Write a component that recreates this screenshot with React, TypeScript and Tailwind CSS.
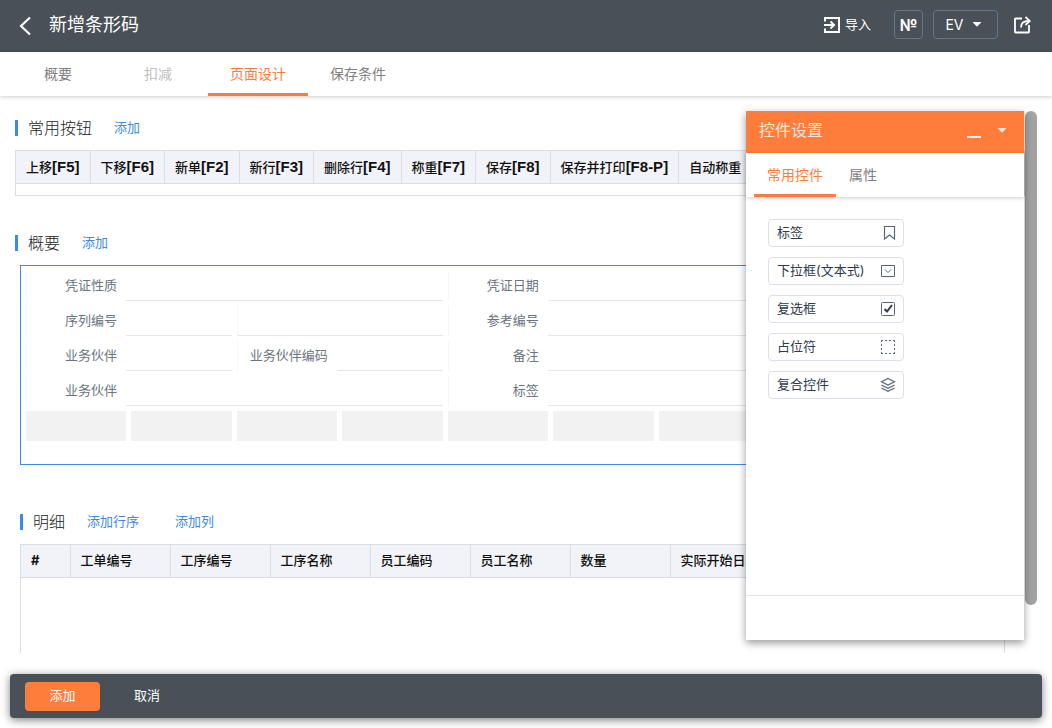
import { useState } from 'react'
import type { ReactNode } from 'react'

const tabs = [
  { name: '概要', disabled: false },
  { name: '扣减', disabled: true },
  { name: '页面设计', disabled: false },
  { name: '保存条件', disabled: false },
]

const shortcutButtons = [
  { name: '上移', hotkey: '[F5]' },
  { name: '下移', hotkey: '[F6]' },
  { name: '新单', hotkey: '[F2]' },
  { name: '新行', hotkey: '[F3]' },
  { name: '删除行', hotkey: '[F4]' },
  { name: '称重', hotkey: '[F7]' },
  { name: '保存', hotkey: '[F8]' },
  { name: '保存并打印', hotkey: '[F8-P]' },
  { name: '自动称重', hotkey: '' },
]

const detailColumns = ['工单编号', '工序编号', '工序名称', '员工编码', '员工名称', '数量', '实际开始日期', '实际结束日期', '备注']

function BackIcon() {
  return (
    <svg width="14" height="20" viewBox="0 0 14 20" fill="none" stroke="currentColor" strokeWidth="2.2">
      <path d="M12 1.500 3 10l9 8.500" />
    </svg>
  )
}

function ImportIcon() {
  return (
    <svg width="18" height="18" viewBox="0 0 18 18" fill="none" stroke="currentColor" strokeWidth="2">
      <path d="M2 5.500V2h14v14H2v-3.500" />
      <path d="M1 9h9.500M7.500 5.500 11 9l-3.500 3.500" />
    </svg>
  )
}

function ShareIcon() {
  return (
    <svg width="18" height="18" viewBox="0 0 18 18" fill="none" stroke="currentColor" strokeWidth="1.800">
      <path d="M9 2.500H2.500Q2 2.500 2 3v13q0 .5.5.5h13q.5 0 .5-.5V9" />
      <path d="M8 11.500C8 7 10.500 5 16 5" />
      <path d="M12.500 1 16.800 5l-4.300 4" />
    </svg>
  )
}

function Caret() {
  return (
    <svg width="10" height="5" viewBox="0 0 10 5" fill="currentColor">
      <path d="M0.500 0h9L5 4.800z" />
    </svg>
  )
}

function BookmarkIcon() {
  return (
    <svg width="16" height="16" viewBox="0 0 16 16" fill="none" stroke="currentColor" strokeWidth="1.200">
      <path d="M4.500 1.500h10v12.500L9.500 10 4.500 14z" />
    </svg>
  )
}

function SelectIcon() {
  return (
    <svg width="16" height="16" viewBox="0 0 16 16" fill="none" stroke="currentColor">
      <path d="M1.500 2.500h13v11h-13z" />
      <path d="M5 6.500 8 9.500l3-3" />
    </svg>
  )
}

function CheckIcon() {
  return (
    <svg width="16" height="16" viewBox="0 0 16 16" fill="none" stroke="currentColor">
      <rect x="1.500" y="1.500" width="13" height="13" rx="1" />
      <path className="stroke-[#2e3a4b]" d="M4.500 8 7 10.500l5-6.500" strokeWidth="2" />
    </svg>
  )
}

function PlaceholderIcon() {
  return (
    <svg width="16" height="16" viewBox="0 0 16 16" fill="none" stroke="currentColor">
      <path d="M1 1.500h14M1 14.500h14M1.500 1v14M14.500 1v14" strokeDasharray="2 2" />
    </svg>
  )
}

function LayersIcon() {
  return (
    <svg width="16" height="16" viewBox="0 0 16 16" fill="none" stroke="currentColor" strokeWidth="1.200">
      <path d="M8 1.500 14.500 4.800 8 8 1.500 4.800z" />
      <path d="M1.500 8 8 11.300 14.500 8" />
      <path d="M1.500 11 8 14.300 14.500 11" />
    </svg>
  )
}

const widgets = [
  { name: '标签', icon: <BookmarkIcon /> },
  { name: '下拉框(文本式)', icon: <SelectIcon /> },
  { name: '复选框', icon: <CheckIcon /> },
  { name: '占位符', icon: <PlaceholderIcon /> },
  { name: '复合控件', icon: <LayersIcon /> },
]

function SectionHead({ title, children }: { title: string; children: ReactNode }) {
  return (
    <div className="flex h-[34px] items-center mb-[5px]">
      <span className="w-[3px] h-4 bg-[#3d8bdf]" />
      <h2 className="ml-[10px] text-base leading-5 font-light text-[#222]">{title}</h2>
      <div className="ml-[22px] flex gap-9 text-[13px] text-[#3d8bdf]">{children}</div>
    </div>
  )
}

function Field({ id, label, span }: { id: string; label: string; span: string }) {
  return (
    <div className={`${span} flex h-[30px] text-[13px]`}>
      <label
        htmlFor={id}
        className="flex w-[100px] shrink-0 items-center justify-end border-l border-[#f7f7f7] pr-[9px] whitespace-nowrap text-[#6b7480]"
      >
        {label}
      </label>
      <input id={id} className="w-full min-w-0 flex-1 border-b border-[#e6e6e6] px-2 outline-none" />
    </div>
  )
}

function WidgetPanel() {
  const [tab, setTab] = useState('常用控件')

  return (
    <aside className="absolute right-7 top-[111px] z-10 flex w-[278px] flex-col bg-white shadow-[0_3px_8px_rgba(0,0,0,0.4)]">
      <div className="flex h-[42px] items-center bg-[#ff7d3b] pb-1 pl-[13px] pr-[17px] text-[#ffe5d8]">
        <h2 className="flex-1 text-base leading-5">控件设置</h2>
        <button type="button" aria-label="最小化" className="mr-4 flex h-4 w-[14px] items-end">
          <span className="h-[2px] w-full bg-current" />
        </button>
        <button type="button" aria-label="展开">
          <Caret />
        </button>
      </div>
      <div className="flex h-11 px-2 text-sm shadow-[0_1px_4px_rgba(0,0,0,0.2)]">
        {['常用控件', '属性'].map((name) => (
          <button
            key={name}
            type="button"
            onClick={() => setTab(name)}
            className={`border-b-3 px-[13px] pt-0.5 ${
              tab === name ? 'border-[#ff7d3b] text-[#ff7d3b]' : 'border-transparent text-[#808080]'
            }`}
          >
            {name}
          </button>
        ))}
      </div>
      <div className="flex h-[398px] flex-col items-start gap-[10px] px-[22px] pt-[22px]">
        {widgets.map((w) => (
          <button
            key={w.name}
            type="button"
            className="flex h-7 w-[136px] items-center justify-between rounded-sm border border-[#dcdfec] pl-2 pr-[7px] text-[13px] text-[#2e3a4b]"
          >
            {w.name}
            <span className="text-[#5a6675]">{w.icon}</span>
          </button>
        ))}
      </div>
      <div className="h-[45px] border-t border-[#e4e4e4]" />
    </aside>
  )
}

export default function App() {
  const [active, setActive] = useState('页面设计')

  return (
    <div className="relative flex h-screen flex-col overflow-hidden bg-white font-[Inter,'Noto_Sans_CJK_SC',sans-serif]">
      <header className="flex h-[52px] shrink-0 items-center bg-[#495057] pl-[18px] pr-[21px] text-white">
        <button type="button" aria-label="返回">
          <BackIcon />
        </button>
        <h1 className="ml-[17px] flex-1 pb-0.5 text-lg leading-6">新增条形码</h1>
        <div className="flex items-center pb-[3px]">
          <button type="button" className="mr-[23px] flex items-center gap-1 text-[13px]">
            <ImportIcon />
            导入
          </button>
          <button
            type="button"
            className="mr-[10px] flex h-[29px] w-[29px] items-center justify-center rounded-sm border border-[#64788c] text-base font-bold"
          >
            №
          </button>
          <button
            type="button"
            className="mr-[15px] flex h-[29px] w-[65px] items-center justify-center gap-2 rounded-sm border border-[#64788c] pr-1 text-sm"
          >
            EV
            <Caret />
          </button>
          <button type="button" aria-label="分享">
            <ShareIcon />
          </button>
        </div>
      </header>

      <nav className="flex h-11 shrink-0 px-2 text-sm shadow-[0_1px_4px_rgba(0,0,0,0.2)]">
        {tabs.map((t) => (
          <button
            key={t.name}
            type="button"
            disabled={t.disabled}
            onClick={() => setActive(t.name)}
            className={`w-[100px] border-b-3 pt-0.5 ${
              active === t.name
                ? 'border-[#ff7d3b] text-[#ff7d3b]'
                : t.disabled
                  ? 'border-transparent text-[#c0c0c0]'
                  : 'border-transparent text-[#808080]'
            }`}
          >
            {t.name}
          </button>
        ))}
      </nav>

      <div className="mb-[21px] mt-[15px] flex min-h-0 flex-1 px-[15px]">
        <main className="min-w-0 flex-1 overflow-hidden">
          <section>
            <SectionHead title="常用按钮">
              <a href="#add-button">添加</a>
            </SectionHead>
            <div className="overflow-hidden border border-[#dadde6]">
              <table className="w-full border-collapse">
                <thead>
                  <tr className="h-8 bg-[#f2f3f8] text-left text-[13px] leading-5 text-[#111]">
                    {shortcutButtons.map((b) => (
                      <th key={b.name} className="border-b border-r border-[#dadde6] px-[10px] font-medium whitespace-nowrap">
                        {b.name}
                        <span className="font-['Liberation_Sans',sans-serif] text-[15px] leading-5 font-bold">{b.hotkey}</span>
                      </th>
                    ))}
                    <th className="w-full border-b border-[#dadde6]" />
                  </tr>
                </thead>
              </table>
              <div className="h-[11px]" />
            </div>
          </section>

          <section className="mt-[30px]">
            <SectionHead title="概要">
              <a href="#add-summary">添加</a>
            </SectionHead>
            <div className="ml-[5px] mr-[49px] grid min-h-[200px] grid-cols-9 content-start gap-[5px] border border-[#3d8bdf] p-[5px]">
              <Field id="nature" label="凭证性质" span="col-span-4" />
              <Field id="date" label="凭证日期" span="col-span-5" />

              <Field id="serial" label="序列编号" span="col-span-2" />
              <input
                aria-label="序列编号"
                className="col-span-2 h-[30px] w-full border-b border-l border-b-[#e6e6e6] border-l-[#f7f7f7] px-2 text-[13px] outline-none"
              />
              <Field id="reference" label="参考编号" span="col-span-5" />

              <Field id="partner" label="业务伙伴" span="col-span-2" />
              <Field id="partner-code" label="业务伙伴编码" span="col-span-2" />
              <Field id="remark" label="备注" span="col-span-5" />

              <Field id="partner-name" label="业务伙伴" span="col-span-4" />
              <Field id="tag" label="标签" span="col-span-5" />

              {Array.from({ length: 9 }, (_, i) => (
                <div key={i} className="h-[30px] bg-[#f2f2f2]" />
              ))}
            </div>
          </section>

          <section className="ml-[5px] mr-5 mt-10">
            <SectionHead title="明细">
              <a href="#add-row">添加行序</a>
              <a href="#add-column">添加列</a>
            </SectionHead>
            <div className="h-[300px] overflow-hidden border border-[#dadde6]">
              <table className="w-[949px] table-fixed border-collapse">
                <thead>
                  <tr className="h-[33px] bg-[#f2f3f8] text-left text-[13px] text-[#111]">
                    <th className="w-[49px] border-b border-r border-[#dadde6] px-[10px] font-bold">#</th>
                    {detailColumns.map((c) => (
                      <th key={c} className="w-[100px] border-b border-r border-[#dadde6] px-[10px] font-medium whitespace-nowrap">
                        {c}
                      </th>
                    ))}
                  </tr>
                </thead>
              </table>
            </div>
          </section>
        </main>
        <div className="h-[494px] w-3 rounded-full bg-[#a3a3a3]" />
      </div>

      <WidgetPanel />

      <footer className="mx-[10px] mb-[10px] flex h-11 shrink-0 items-center gap-[34px] rounded-sm bg-[#495057] px-[15px] text-[13px] text-white shadow-[0_2px_8px_rgba(0,0,0,0.5)]">
        <button type="button" className="h-[29px] w-[75px] rounded-sm bg-[#ff7d3b]">
          添加
        </button>
        <button type="button">取消</button>
      </footer>
    </div>
  )
}
